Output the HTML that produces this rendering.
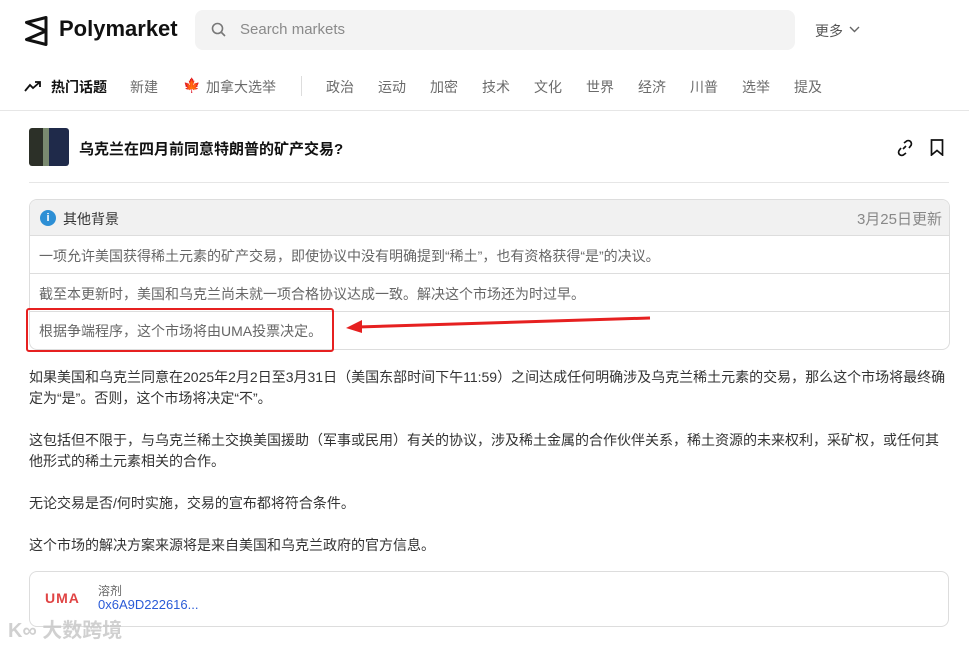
<!DOCTYPE html>
<html><head><meta charset="utf-8"><style>
*{margin:0;padding:0;box-sizing:border-box}
body{width:969px;height:645px;overflow:hidden;background:#fff;font-family:"Liberation Sans","Noto Sans CJK SC",sans-serif;color:#1f1f1f;position:relative}
.a{position:absolute;white-space:nowrap}
.nav{font-size:14px;color:#6b6b6b;top:77px}
.p{left:29px;font-size:14px;color:#333;line-height:21px;width:920px;white-space:normal}
</style></head><body>
<svg class="a" style="left:22px;top:14px" width="30" height="34" viewBox="22 14 30 34"><path d="M46 17.5 L26.5 22.5 L46 31 L26.5 39.5 L46 44.5 Z" fill="none" stroke="#111" stroke-width="3" stroke-linejoin="round"/></svg>
<div class="a" style="left:59px;top:16px;font-size:22px;font-weight:bold;color:#111">Polymarket</div>
<div class="a" style="left:195px;top:10px;width:600px;height:40px;background:#f3f3f3;border-radius:8px"></div>
<svg class="a" style="left:211px;top:22px" width="16" height="16" viewBox="0 0 16 16"><circle cx="6.5" cy="6.5" r="5" fill="none" stroke="#777" stroke-width="1.6"/><path d="M10.5 10.5 L14 14" stroke="#777" stroke-width="1.6"/></svg>
<div class="a" style="left:240px;top:21px;font-size:15px;color:#8a8a8a">Search markets</div>
<div class="a" style="left:815px;top:21px;font-size:14px;color:#555">更多</div>
<svg class="a" style="left:849px;top:26px" width="11" height="7" viewBox="0 0 11 7"><path d="M1 1 L5.5 5.5 L10 1" fill="none" stroke="#666" stroke-width="1.4"/></svg>
<svg class="a" style="left:24px;top:80px" width="18" height="12" viewBox="0 0 18 12"><path d="M1 11 L6 5 L9 8 L16 2 M11 2 H16 V7" fill="none" stroke="#111" stroke-width="1.8"/></svg>
<div class="a nav" style="left:51px;color:#111;font-weight:bold">热门话题</div>
<div class="a nav" style="left:130px">新建</div>
<div class="a nav" style="left:183px;color:#d52b1e">🍁</div>
<div class="a nav" style="left:206px">加拿大选举</div>
<div class="a" style="left:301px;top:76px;width:1px;height:20px;background:#ddd"></div>
<div class="a nav" style="left:326px">政治</div><div class="a nav" style="left:378px">运动</div><div class="a nav" style="left:430px">加密</div><div class="a nav" style="left:482px">技术</div><div class="a nav" style="left:534px">文化</div><div class="a nav" style="left:586px">世界</div><div class="a nav" style="left:638px">经济</div><div class="a nav" style="left:690px">川普</div><div class="a nav" style="left:742px">选举</div><div class="a nav" style="left:794px">提及</div>
<div class="a" style="left:0;top:110px;width:969px;height:1px;background:#e6e6e6"></div>
<div class="a" style="left:29px;top:128px;width:40px;height:38px;border-radius:3px;background:linear-gradient(90deg,#2c3028 0 35%,#7a8a70 35% 50%,#1f2a4a 50%)"></div>
<div class="a" style="left:79px;top:138px;font-size:15px;font-weight:bold;color:#111">乌克兰在四月前同意特朗普的矿产交易?</div>
<svg class="a" style="left:896px;top:139px" width="18" height="18" viewBox="0 0 18 18"><path d="M7 10 L10 7 M8 4 L10 2.5 a3 3 0 0 1 4.5 4.5 L13 9 M10 14 L8 15.5 a3 3 0 0 1 -4.5 -4.5 L5 9" fill="none" stroke="#111" stroke-width="1.7"/></svg>
<svg class="a" style="left:930px;top:139px" width="14" height="17" viewBox="0 0 14 17"><path d="M1.5 1 H12.5 V16 L7 11.5 L1.5 16 Z" fill="none" stroke="#111" stroke-width="1.7"/></svg>
<div class="a" style="left:29px;top:182px;width:920px;height:1px;background:#e6e6e6"></div>
<div class="a" style="left:29px;top:199px;width:921px;height:151px;border:1px solid #ddd;border-radius:8px;overflow:hidden">
<div style="height:36px;background:#f1f1f1;border-bottom:1px solid #ddd;position:relative">
<div class="a" style="left:10px;top:10px;width:16px;height:16px;border-radius:50%;background:#2d8fd5;color:#fff;font-size:11px;font-weight:bold;text-align:center;line-height:16px">i</div>
<div class="a" style="left:33px;top:9px;font-size:14px;color:#333">其他背景</div>
<div class="a" style="right:7px;top:8px;font-size:15px;color:#888">3月25日更新</div></div>
<div style="height:38px;border-bottom:1px solid #ddd;padding:10px 9px;font-size:14px;color:#666">一项允许美国获得稀土元素的矿产交易，即使协议中没有明确提到“稀土”，也有资格获得“是”的决议。</div>
<div style="height:38px;border-bottom:1px solid #ddd;padding:10px 9px;font-size:14px;color:#666">截至本更新时，美国和乌克兰尚未就一项合格协议达成一致。解决这个市场还为时过早。</div>
<div style="height:38px;padding:9px 9px;font-size:14px;color:#666">根据争端程序，这个市场将由UMA投票决定。</div>
</div>
<div class="a" style="left:26px;top:308px;width:308px;height:44px;border:2px solid #e62020;border-radius:3px"></div>
<svg class="a" style="left:340px;top:312px" width="320" height="24" viewBox="0 0 320 24"><path d="M310 6 L18 15" stroke="#e62020" stroke-width="3" fill="none"/><path d="M6 16 L22 8 L22 21 Z" fill="#e62020"/></svg>
<div class="a p" style="top:367px">如果美国和乌克兰同意在2025年2月2日至3月31日（美国东部时间下午11:59）之间达成任何明确涉及乌克兰稀土元素的交易，那么这个市场将最终确定为“是”。否则，这个市场将决定“不”。</div>
<div class="a p" style="top:430px">这包括但不限于，与乌克兰稀土交换美国援助（军事或民用）有关的协议，涉及稀土金属的合作伙伴关系，稀土资源的未来权利，采矿权，或任何其他形式的稀土元素相关的合作。</div>
<div class="a p" style="top:493px">无论交易是否/何时实施，交易的宣布都将符合条件。</div>
<div class="a p" style="top:535px">这个市场的解决方案来源将是来自美国和乌克兰政府的官方信息。</div>
<div class="a" style="left:29px;top:571px;width:920px;height:56px;border:1px solid #ddd;border-radius:8px"></div>
<div class="a" style="left:45px;top:590px;font-size:14px;font-weight:bold;color:#e04444;letter-spacing:1px">UMA</div>
<div class="a" style="left:98px;top:582px;font-size:12px;color:#666">溶剂</div>
<div class="a" style="left:98px;top:597px;font-size:13px;color:#2a5bd7">0x6A9D222616...</div>
<div class="a" style="left:8px;top:614px;font-size:20px;color:rgba(200,200,200,.85);font-weight:bold">K∞ 大数跨境</div>
</body></html>
